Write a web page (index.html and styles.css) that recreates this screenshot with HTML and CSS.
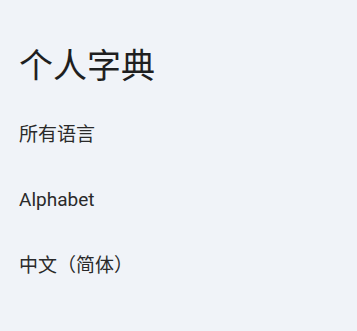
FILE: index.html
```html
<!DOCTYPE html>
<html lang="zh-CN">
<head>
<meta charset="utf-8">
<title>个人字典</title>
<link rel="stylesheet" href="styles.css">
</head>
<body>
<main class="page">
  <h1 class="title">个人字典</h1>
  <ul class="list">
    <li class="item">所有语言</li>
    <li class="item">Alphabet</li>
    <li class="item">中文（简体）</li>
  </ul>
</main>
</body>
</html>
```

FILE: styles.css
```css
html, body {
  margin: 0;
  padding: 0;
  background: #f0f3f8;
}
body {
  font-family: Roboto, "Noto Sans CJK SC", sans-serif;
  color: #1f1f1f;
}
.page {
  padding: 46px 0 0 19px;
}
.title {
  margin: 0 0 16px 0;
  font-size: 34px;
  line-height: 40px;
  font-weight: 400;
  color: #1f1f1f;
}
.list {
  list-style: none;
  margin: 0;
  padding: 0;
}
.item {
  padding: 20.75px 0;
  font-size: 19px;
  line-height: 24px;
  color: #2a2a2a;
}
```
